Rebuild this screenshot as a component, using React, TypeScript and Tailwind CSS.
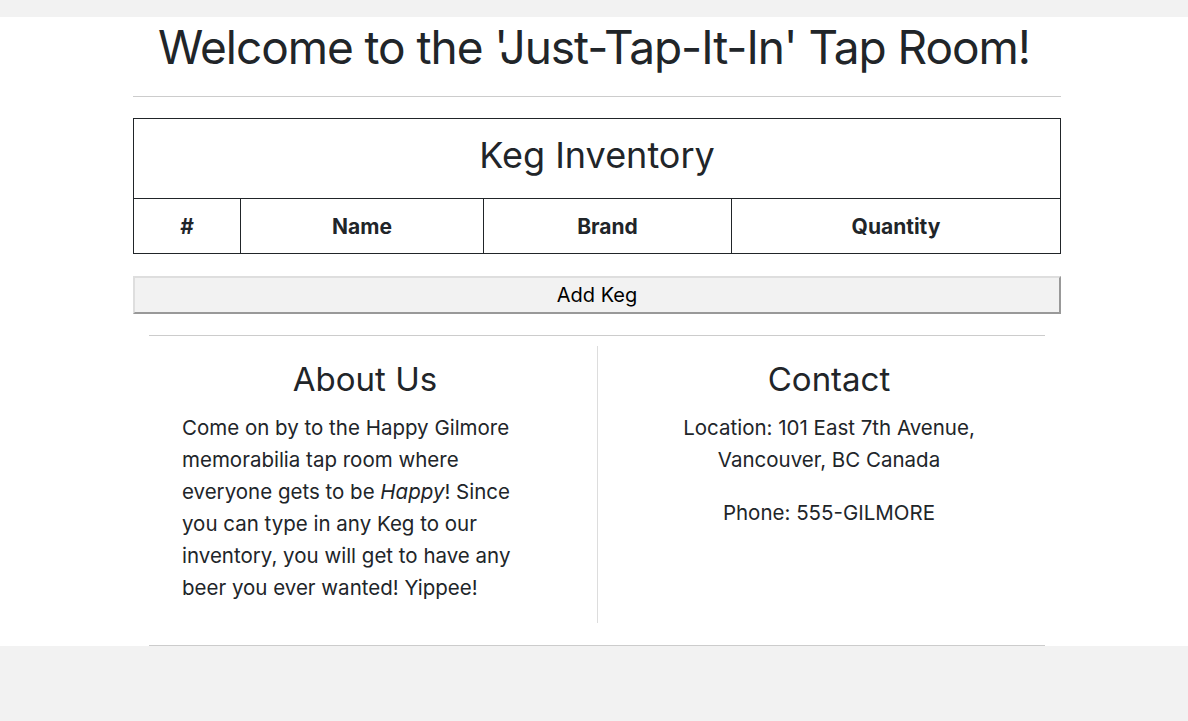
import React from 'react'

const font = { fontFamily: 'Inter, "Noto Sans", sans-serif' }

export default function App() {
  return (
    <div className="min-h-screen bg-[#f2f2f2] pt-[17px] text-[#212529]" style={font}>
      <div className="bg-white">
        <h1 className="text-center text-[46px] leading-[60px] tracking-[-1.05px]">
          Welcome to the 'Just-Tap-It-In' Tap Room!
        </h1>
        <hr className="ml-[133px] w-[928px] mt-[19px] border-[#cccccc]" />
        <table className="ml-[133px] mt-[21px] w-[928px] border-collapse">
          <thead>
            <tr>
              <th colSpan={4} className="border border-[#212529] h-[80px] text-[36px] font-normal pb-[7px]">
                Keg Inventory
              </th>
            </tr>
            <tr className="h-[55px] text-[21px] font-bold">
              <th className="border border-[#212529] w-[107px] pt-[2px]">#</th>
              <th className="border border-[#212529] w-[243px] pt-[2px]">Name</th>
              <th className="border border-[#212529] w-[248px] pt-[2px]">Brand</th>
              <th className="border border-[#212529] pt-[2px]">Quantity</th>
            </tr>
          </thead>
        </table>
        <div className="ml-[133px] w-[928px] mt-[22px]">
          <button className="w-full h-[38px] bg-[#f2f2f2] border-2 border-t-[#dedede] border-l-[#dedede] border-b-[#999999] border-r-[#999999] text-[20px] text-black">
            Add Keg
          </button>
        </div>
        <hr className="ml-[149px] w-[896px] mt-[21px] border-[#cccccc]" />
        <div className="ml-[149px] w-[896px] grid grid-cols-2 pt-[10px]">
          <div className="pl-[33px] pr-[49px] pt-[13px]">
            <h3 className="text-center text-[33px] leading-[40px]">About Us</h3>
            <p className="mt-[13px] w-[352px] text-[20.5px] leading-[32px]">
              Come on by to the Happy Gilmore memorabilia tap room where everyone gets to be <em>Happy</em>! Since you can type in any Keg to our inventory, you will get to have any beer you ever wanted! Yippee!
            </p>
            <div className="h-[19px]" />
          </div>
          <div className="border-l border-[#dddddd] pl-[48px] pr-[33px] pt-[13px] text-center">
            <h3 className="text-[33px] leading-[40px]">Contact</h3>
            <p className="mt-[13px] text-[20.5px] leading-[32px]">
              Location: 101 East 7th Avenue,
              <br />
              Vancouver, BC Canada
            </p>
            <p className="mt-[21px] text-[20.5px] leading-[32px]">Phone: 555-GILMORE</p>
          </div>
        </div>
        <hr className="ml-[149px] w-[896px] mt-[22px] border-[#cccccc]" />
      </div>
    </div>
  )
}
